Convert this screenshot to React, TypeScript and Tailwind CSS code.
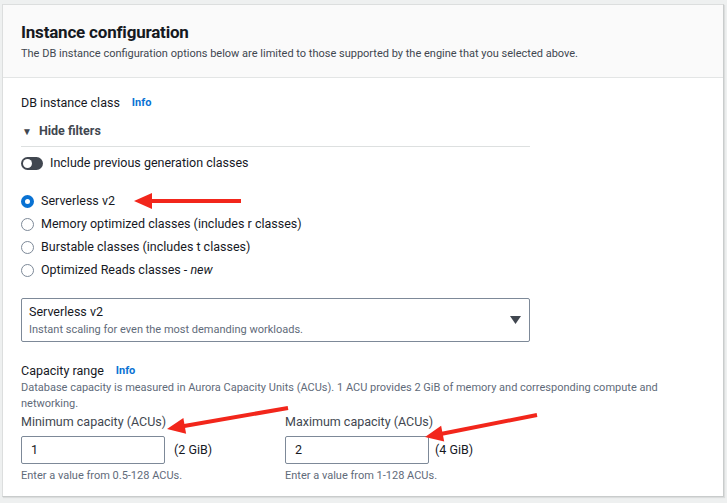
import React from 'react';

const font = { fontFamily: 'Roboto, "Liberation Sans", sans-serif' };

function Info() {
  return <span className="ml-3 text-[11px] font-bold text-[#0972d3]">Info</span>;
}

function Radio({ checked, children }: { checked?: boolean; children: React.ReactNode }) {
  return (
    <div className="flex items-center gap-[7px] h-[23px]">
      {checked ? (
        <span className="w-[13px] h-[13px] rounded-full border-[4px] border-[#0972d3] bg-white" />
      ) : (
        <span className="w-[13px] h-[13px] rounded-full border border-[#7d8998] bg-white" />
      )}
      <span className="text-[12.5px] text-[#16191f]">{children}</span>
    </div>
  );
}

function Arrow({ x1, y1, x2, y2 }: { x1: number; y1: number; x2: number; y2: number }) {
  const dx = x2 - x1;
  const dy = y2 - y1;
  const len = Math.hypot(dx, dy);
  const ux = dx / len;
  const uy = dy / len;
  const hl = 18;
  const hw = 8;
  const bx = x2 - ux * hl;
  const by = y2 - uy * hl;
  const pts = `${x2},${y2} ${bx - uy * hw},${by + ux * hw} ${bx + uy * hw},${by - ux * hw}`;
  return (
    <g>
      <line x1={x1} y1={y1} x2={bx + ux * 2} y2={by + uy * 2} stroke="#f2261b" strokeWidth={4} />
      <polygon points={pts} fill="#f2261b" />
    </g>
  );
}

export default function App() {
  return (
    <div className="relative w-[727px] h-[503px] bg-[#eef0f0] pt-[4px] pl-[2px] pr-[3px]" style={font}>
      <div className="bg-white border border-[#dcdede] border-r-[#c9cccc] border-b-[#c9cccc] h-[493px] shadow-[1px_1px_1px_rgba(0,0,0,0.08)]">
        <div className="bg-[#fafafa] border-b border-[#e3e5e5] h-[73px] pl-[18px] pt-[15px]">
          <h2 className="text-[17px] font-bold text-[#16191f] leading-[24px] tracking-[-0.2px]">Instance configuration</h2>
          <p className="text-[11px] text-[#414750] mt-[2px]">
            The DB instance configuration options below are limited to those supported by the engine that you selected above.
          </p>
        </div>
        <div className="pl-[18px] pr-[18px] pt-[16px]">
          <div className="flex items-center h-[18px] text-[12.5px] text-[#16191f]">
            DB instance class <Info />
          </div>
          <div className="w-[509px]">
            <div className="flex items-center gap-[7px] h-[18px] mt-[10px] pb-0 text-[12.5px] font-bold text-[#414750]">
              <span className="text-[10px] ml-[1px]">▼</span>
              Hide filters
            </div>
            <div className="border-b border-[#dde0e0] mt-[6px]" />
            <div className="flex items-center gap-[7px] mt-[8px] h-[16px]">
              <span className="relative w-[22px] h-[13px] rounded-full bg-[#414750]">
                <span className="absolute left-[2px] top-[2px] w-[9px] h-[9px] rounded-full bg-white" />
              </span>
              <span className="text-[12.5px] text-[#16191f]">Include previous generation classes</span>
            </div>
            <div className="mt-[19px] flex flex-col">
              <Radio checked>Serverless v2</Radio>
              <Radio>Memory optimized classes (includes r classes)</Radio>
              <Radio>Burstable classes (includes t classes)</Radio>
              <Radio>
                Optimized Reads classes - <i>new</i>
              </Radio>
            </div>
            <div className="mt-[16px] h-[44px] border border-[#7d8998] rounded-[2px] flex items-center justify-between pl-[7px] pr-[8px]">
              <div>
                <div className="text-[12.5px] text-[#16191f] leading-[16px]">Serverless v2</div>
                <div className="text-[11px] text-[#5f6b7a] leading-[15px] mt-[2px]">
                  Instant scaling for even the most demanding workloads.
                </div>
              </div>
              <svg width="11" height="8" viewBox="0 0 11 8">
                <polygon points="0,0 11,0 5.5,8" fill="#414750" />
              </svg>
            </div>
          </div>
          <div className="flex items-center h-[18px] mt-[20px] text-[12.5px] text-[#16191f]">
            Capacity range <Info />
          </div>
          <p className="text-[11px] text-[#5f6b7a] leading-[16px] mt-0 w-[650px]">
            Database capacity is measured in Aurora Capacity Units (ACUs). 1 ACU provides 2 GiB of memory and corresponding compute and networking.
          </p>
          <div className="flex gap-0 mt-[1px]">
            <div className="w-[264px]">
              <div className="text-[12.5px] text-[#414750] h-[18px] leading-[18px]">Minimum capacity (ACUs)</div>
              <div className="flex items-center mt-[5px]">
                <div className="w-[144px] h-[28px] border border-[#7d8998] rounded-[2px] flex items-center pl-[9px] text-[12.5px] text-[#16191f]">1</div>
                <span className="ml-[9px] text-[12.5px] text-[#16191f]">(2 GiB)</span>
              </div>
              <div className="text-[11px] text-[#5f6b7a] mt-[4px]">Enter a value from 0.5-128 ACUs.</div>
            </div>
            <div>
              <div className="text-[12.5px] text-[#414750] h-[18px] leading-[18px]">Maximum capacity (ACUs)</div>
              <div className="flex items-center mt-[5px]">
                <div className="w-[144px] h-[28px] border border-[#7d8998] rounded-[2px] flex items-center pl-[9px] text-[12.5px] text-[#16191f]">2</div>
                <span className="ml-[6px] text-[12.5px] text-[#16191f]">(4 GiB)</span>
              </div>
              <div className="text-[11px] text-[#5f6b7a] mt-[4px]">Enter a value from 1-128 ACUs.</div>
            </div>
          </div>
        </div>
      </div>
      <svg className="absolute left-0 top-0 pointer-events-none" width="727" height="503">
        <Arrow x1={241} y1={201} x2={134} y2={201} />
        <Arrow x1={288} y1={408} x2={167} y2={429} />
        <Arrow x1={537} y1={415} x2={425} y2={437} />
      </svg>
    </div>
  );
}
